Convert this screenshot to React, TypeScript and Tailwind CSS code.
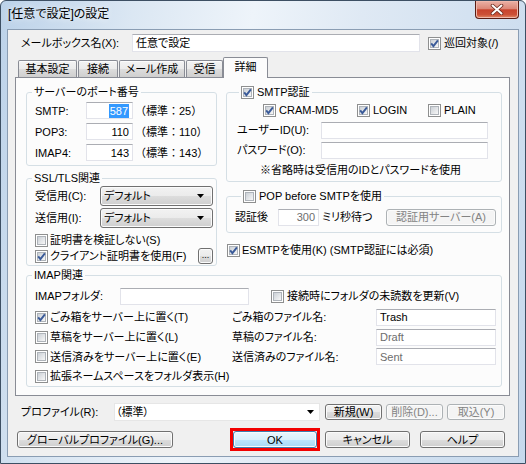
import React from "react";

type Kids = { children?: React.ReactNode; className?: string };

const Check = ({ on = false, className = "" }: { on?: boolean; className?: string }) => (
  <span className={`relative inline-block h-[13px] w-[13px] shrink-0 border border-[#8e8f8f] bg-white p-[1px] ${className}`}>
    <span className="block h-full w-full border border-[#aeb3b9] bg-[linear-gradient(135deg,#cbd0d6,#f7f7f7)]" />
    {on && (
      <svg className="absolute left-0 top-0" width="11" height="11" viewBox="0 0 11 11">
        <path d="M2.2 5.4 L4.4 8.2 L8.9 2.3" fill="none" stroke="#3b5b99" strokeWidth="1.9" />
      </svg>
    )}
  </span>
);

const Field = ({ children, className = "", right = false, gray = false }: Kids & { right?: boolean; gray?: boolean }) => (
  <div
    className={`flex h-[17px] shrink-0 items-center border border-[#e2e3ea] border-t-[#abadb3] bg-white px-[3px] ${
      right ? "justify-end" : ""
    } ${gray ? "text-[#6d6d6d]" : ""} ${className}`}
  >
    {children}
  </div>
);

const Arrow = ({ className = "" }: { className?: string }) => (
  <svg className={className} width="7" height="4" viewBox="0 0 7 4">
    <path d="M0 0 H7 L3.5 4 Z" fill="#000" />
  </svg>
);

const Btn = ({ children, className = "", disabled = false, ok = false }: Kids & { disabled?: boolean; ok?: boolean }) => (
  <button
    type="button"
    className={`flex shrink-0 items-center justify-center rounded-[3px] border shadow-[inset_0_0_0_1px_#fbfbfb] ${
      disabled
        ? "border-[#adb2b5] bg-[#f4f4f4] text-[#838383]"
        : ok
        ? "border-[#3c7fb1] bg-[linear-gradient(to_bottom,#eaf6fd_0%,#d9f0fc_50%,#bee6fd_50%,#a7d9f5_100%)]"
        : "border-[#707070] bg-[linear-gradient(to_bottom,#f2f2f2_0%,#ebebeb_50%,#dddddd_50%,#cfcfcf_100%)]"
    } ${className}`}
  >
    {children}
  </button>
);

const Select = ({ children, className = "" }: Kids) => (
  <div
    className={`flex h-[20px] shrink-0 items-center rounded-[3px] border border-[#707070] bg-[linear-gradient(to_bottom,#f2f2f2_0%,#ebebeb_50%,#dddddd_50%,#cfcfcf_100%)] pl-[3px] shadow-[inset_0_0_0_1px_#fbfbfb] ${className}`}
  >
    {children}
    <Arrow className="ml-auto mr-[8px]" />
  </div>
);

const Group = ({ legend, children, className = "", lc = "ml-[5px]" }: Kids & { legend: React.ReactNode; lc?: string }) => (
  <fieldset className={`rounded-[3px] border border-[#d5dfe5] ${className}`}>
    <legend className={`flex h-[14px] items-center px-[2px] ${lc}`}>{legend}</legend>
    {children}
  </fieldset>
);

const Tab = ({ children, className = "" }: Kids) => (
  <div
    className={`flex h-[17px] items-center justify-center rounded-t-[2px] border border-b-0 border-[#898c95] bg-[linear-gradient(to_bottom,#f3f3f3_0%,#ebebeb_50%,#dddddd_50%,#cfcfcf_100%)] shadow-[inset_0_1px_0_0_#fcfcfc] ${className}`}
  >
    {children}
  </div>
);

const PortRow = ({ label, value, std, sel = false }: { label: string; value: string; std: string; sel?: boolean }) => (
  <div className="flex h-[21px] items-center pl-[8px]">
    <span className="w-[51px]">{label}</span>
    <Field right className="w-[47px]">
      {sel ? <span className="bg-[#3399ff] px-[1px] text-white">{value}</span> : value}
    </Field>
    <span className="ml-[2px] [font-feature-settings:normal]">{std}</span>
  </div>
);

const ImapRow = ({ h, on = false, label, name, value, gray = false }: { h: string; on?: boolean; label: string; name: string; value: string; gray?: boolean }) => (
  <div className={`flex items-center pl-[8px] ${h}`}>
    <span className="flex w-[197px] items-center">
      <Check on={on} />
      <span className="ml-[2px]">{label}</span>
    </span>
    <span className="w-[144px]">{name}</span>
    <Field gray={gray} className="w-[120px]">
      {value}
    </Field>
  </div>
);

export default function App() {
  return (
    <div className="h-[464px] w-[526px] overflow-hidden whitespace-nowrap rounded-t-[6px] border border-[#3d4f63] bg-[linear-gradient(100deg,#bcd2e9_0%,#dbe7f3_22%,#eef4fa_42%,#dfe9f4_60%,#c6d9ed_100%)] font-['Liberation_Sans','Noto_Sans_CJK_JP',sans-serif] text-[11px] leading-[14px] text-black [font-feature-settings:'palt']">
      {/* title bar */}
      <div className="flex h-[28px] items-start justify-between">
        <div className="pl-[7px] pt-[6px] text-[12px] [text-shadow:0_0_6px_#fff]">[任意で設定]の設定</div>
        <div className="mr-[6px] flex h-[18px] w-[44px] items-center justify-center rounded-b-[4px] border border-t-0 border-[#5a1d14] bg-[linear-gradient(to_bottom,#ebb1a6_0%,#dc8878_45%,#c8432d_52%,#cc5138_80%,#e18b66_100%)] shadow-[inset_0_0_0_1px_#f0b8ab]">
          <svg width="14" height="11" viewBox="0 0 14 11">
            <path d="M2.5 1.5 L11.5 9.5 M11.5 1.5 L2.5 9.5" stroke="#6b2a1e" strokeWidth="3.6" strokeLinecap="round" />
            <path d="M2.5 1.5 L11.5 9.5 M11.5 1.5 L2.5 9.5" stroke="#fff" strokeWidth="2" strokeLinecap="round" />
          </svg>
        </div>
      </div>

      {/* client area */}
      <div className="mx-[6px] h-[428px] border border-[#8a9db3] bg-[#f0f0f0]">
        <div className="mt-[4px] flex h-[18px] items-center pl-[13px]">
          <span className="w-[111px]">メールボックス名(X):</span>
          <Field className="h-[18px] w-[288px]">任意で設定</Field>
          <Check on className="ml-[8px]" />
          <span className="ml-[3px]">巡回対象(/)</span>
        </div>

        {/* tabs */}
        <div className="mt-[5px] flex h-[20px] items-end pl-[10px]">
          <Tab className="w-[59px]">基本設定</Tab>
          <Tab className="ml-[1px] w-[40px]">接続</Tab>
          <Tab className="ml-[1px] w-[66px]">メール作成</Tab>
          <Tab className="ml-[1px] w-[37px]">受信</Tab>
          <div className="relative z-10 -mb-[1px] flex h-[21px] w-[45px] items-center justify-center rounded-t-[2px] border border-b-0 border-[#898c95] bg-[#fcfcfc] pb-[2px]">
            詳細
          </div>
        </div>

        <div className="ml-[7px] h-[319px] w-[495px] border border-[#898c95] bg-[#fcfcfc] pt-[7px]">
          <div className="flex items-start pl-[10px]">
            {/* left column */}
            <div className="w-[191px]">
              <Group className="pb-[2px]" legend="サーバーのポート番号">
                <div className="mt-[1px]">
                  <PortRow label="SMTP:" value="587" std="（標準：25）" sel />
                  <PortRow label="POP3:" value="110" std="（標準：110）" />
                  <PortRow label="IMAP4:" value="143" std="（標準：143）" />
                </div>
              </Group>
              <Group className="mt-[5px]" legend="SSL/TLS関連">
                <div className="flex h-[22px] items-center pl-[8px]">
                  <span className="w-[65px]">受信用(C):</span>
                  <Select className="w-[113px]">デフォルト</Select>
                </div>
                <div className="flex h-[22px] items-center pl-[8px]">
                  <span className="w-[65px]">送信用(I):</span>
                  <Select className="w-[113px]">デフォルト</Select>
                </div>
                <div className="mt-[3px] flex h-[16px] items-center pl-[8px]">
                  <Check />
                  <span className="ml-[2px]">証明書を検証しない(S)</span>
                </div>
                <div className="mb-[1px] flex h-[16px] items-center pl-[8px] pr-[3px]">
                  <Check on />
                  <span className="ml-[2px]">クライアント証明書を使用(F)</span>
                  <Btn className="ml-auto h-[16px] w-[15px] pb-[3px] text-[9px]">...</Btn>
                </div>
              </Group>
            </div>

            {/* right column */}
            <div className="ml-[9px] w-[276px]">
              <Group
                lc="ml-[12px]"
                legend={
                  <>
                    <Check on />
                    <span className="ml-[3px]">SMTP認証</span>
                  </>
                }
              >
                <div className="mt-[1px] flex h-[20px] items-center pl-[36px]">
                  <span className="flex w-[94px] items-center">
                    <Check on />
                    <span className="ml-[3px]">CRAM-MD5</span>
                  </span>
                  <span className="flex w-[71px] items-center">
                    <Check on />
                    <span className="ml-[3px]">LOGIN</span>
                  </span>
                  <span className="flex items-center">
                    <Check />
                    <span className="ml-[3px]">PLAIN</span>
                  </span>
                </div>
                <div className="flex h-[20px] items-center pl-[10px]">
                  <span className="w-[84px]">ユーザーID(U):</span>
                  <Field className="w-[167px]" />
                </div>
                <div className="flex h-[20px] items-center pl-[10px]">
                  <span className="w-[84px]">パスワード(O):</span>
                  <Field className="w-[167px]" />
                </div>
                <div className="mb-[1px] flex h-[20px] items-center pl-[33px]">※省略時は受信用のIDとパスワードを使用</div>
              </Group>

              <Group
                className="mt-[7px]"
                lc="ml-[14px]"
                legend={
                  <>
                    <Check />
                    <span className="ml-[3px]">POP before SMTPを使用</span>
                  </>
                }
              >
                <div className="mb-[4px] mt-[3px] flex h-[22px] items-center pl-[8px] pr-[5px]">
                  <span className="w-[43px]">認証後</span>
                  <Field right gray className="w-[41px]">
                    300
                  </Field>
                  <span className="ml-[3px]">ミリ秒待つ</span>
                  <Btn disabled className="ml-auto h-[17px] w-[110px]">
                    認証用サーバー(A)
                  </Btn>
                </div>
              </Group>

              <div className="mt-[9px] flex h-[16px] items-center pl-[1px]">
                <Check on />
                <span className="ml-[2px]">ESMTPを使用(K) (SMTP認証には必須)</span>
              </div>
            </div>
          </div>

          {/* IMAP */}
          <Group className="ml-[10px] mt-[2px] w-[476px]" legend="IMAP関連">
            <div className="mt-[3px] flex h-[22px] items-center pl-[8px]">
              <span className="w-[85px]">IMAPフォルダ:</span>
              <Field className="w-[129px]" />
              <Check className="ml-[22px]" />
              <span className="ml-[3px]">接続時にフォルダの未読数を更新(V)</span>
            </div>
            <ImapRow h="h-[20px]" on label="ごみ箱をサーバー上に置く(T)" name="ごみ箱のファイル名:" value="Trash" />
            <ImapRow h="h-[20px]" label="草稿をサーバー上に置く(L)" name="草稿のファイル名:" value="Draft" gray />
            <ImapRow h="h-[19px]" label="送信済みをサーバー上に置く(E)" name="送信済みのファイル名:" value="Sent" gray />
            <div className="flex h-[20px] items-center pl-[8px]">
              <Check />
              <span className="ml-[2px]">拡張ネームスペースをフォルダ表示(H)</span>
            </div>
          </Group>
        </div>

        {/* profile row */}
        <div className="mt-[7px] flex h-[18px] items-center pl-[13px]">
          <span className="w-[93px]">プロファイル(R):</span>
          <div className="flex h-[18px] w-[206px] items-center border border-[#e6e6e6] bg-white pl-[1px]">
            （標準）
            <Arrow className="ml-auto mr-[5px]" />
          </div>
          <Btn className="ml-[5px] h-[16px] w-[57px]">新規(W)</Btn>
          <Btn disabled className="ml-[4px] h-[16px] w-[57px]">
            削除(D)...
          </Btn>
          <Btn disabled className="ml-[4px] h-[16px] w-[58px]">
            取込(Y)
          </Btn>
        </div>

        {/* buttons */}
        <div className="mt-[10px] flex h-[17px] items-center pl-[9px]">
          <Btn className="h-[17px] w-[156px]">グローバルプロファイル(G)...</Btn>
          <div className="ml-[57px] border-[3px] border-[#f20000]">
            <Btn ok className="h-[17px] w-[84px]">
              OK
            </Btn>
          </div>
          <Btn className="ml-[5px] h-[17px] w-[85px]">キャンセル</Btn>
          <Btn className="ml-[10px] h-[17px] w-[85px]">ヘルプ</Btn>
        </div>
      </div>
    </div>
  );
}
